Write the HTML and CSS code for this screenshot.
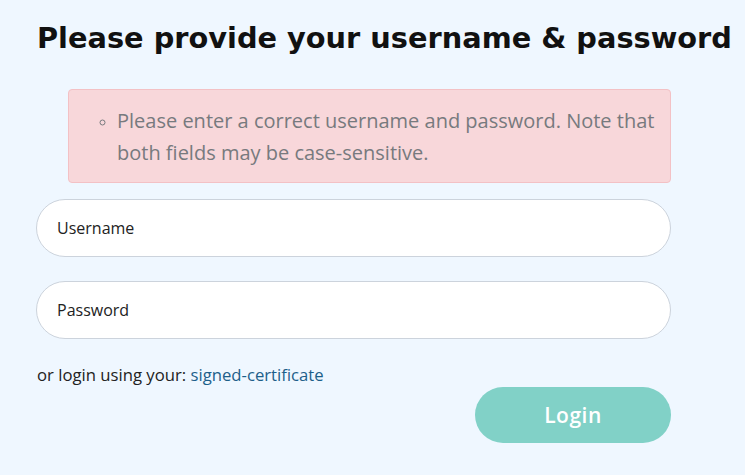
FILE: index.html
```html
<!DOCTYPE html>
<html lang="en">
<head>
<meta charset="utf-8">
<title>Login</title>
<link rel="stylesheet" href="styles.css">
</head>
<body>
<main class="page">
  <h1 class="title">Please provide your username &amp; password</h1>
  <form class="form">
    <div class="alert">
      <ul class="alert-list">
        <li>Please enter a correct username and password. Note that both fields may be case-sensitive.</li>
      </ul>
    </div>
    <input class="field" type="text" placeholder="Username">
    <input class="field" type="password" placeholder="Password">
    <p class="alt">or login using your: <a href="#" class="alt-link">signed-certificate</a></p>
    <div class="actions">
      <button type="button" class="btn">Login</button>
    </div>
  </form>
</main>
</body>
</html>
```

FILE: styles.css
```css
html, body {
  margin: 0;
  padding: 0;
  background: #eff7ff;
  height: 100%;
}
body {
  font-family: "Open Sans", "Liberation Sans", sans-serif;
  color: #212529;
}
.page {
  padding: 14px 0 0 36px;
  width: 635px;
}
.title {
  margin: 0 0 0 1px;
  font-family: "DejaVu Sans", "Open Sans", sans-serif;
  font-size: 28.8px;
  font-weight: 700;
  line-height: 48px;
  color: #111;
  white-space: nowrap;
}
.form {
  display: flex;
  flex-direction: column;
  margin-top: 27px;
}
.alert {
  margin-left: 32px;
  background: #f8d7da;
  border: 1px solid #f3c1c5;
  border-radius: 4px;
  padding: 15px 4px 13px 0;
}
.alert-list {
  margin: 0;
  padding-left: 48px;
  list-style: circle;
  font-size: 20px;
  line-height: 32px;
  color: #777a7e;
}
.alert-list li::marker {
  font-size: 14px;
}
.field {
  margin-top: 16px;
  height: 58px;
  box-sizing: border-box;
  border: 1px solid #ccd3dc;
  border-radius: 29px;
  background: #fff;
  padding: 0 20px;
  font-family: "Open Sans", "Liberation Sans", sans-serif;
  font-size: 16px;
  color: #212529;
  outline: none;
}
.field + .field {
  margin-top: 24px;
}
.field::placeholder {
  color: #222;
  opacity: 1;
}
.alt {
  margin: 26px 0 0 1px;
  font-size: 16.7px;
  line-height: 20px;
  color: #222;
}
.alt-link {
  color: #1d5f8a;
  text-decoration: none;
}
.actions {
  display: flex;
  justify-content: flex-end;
  margin-top: 2px;
}
.btn {
  width: 196px;
  height: 56px;
  border: none;
  border-radius: 28px;
  background: #81d1c7;
  color: #fff;
  font-family: "Open Sans", "Liberation Sans", sans-serif;
  font-size: 21px;
  font-weight: 600;
  letter-spacing: 0.5px;
}
```
